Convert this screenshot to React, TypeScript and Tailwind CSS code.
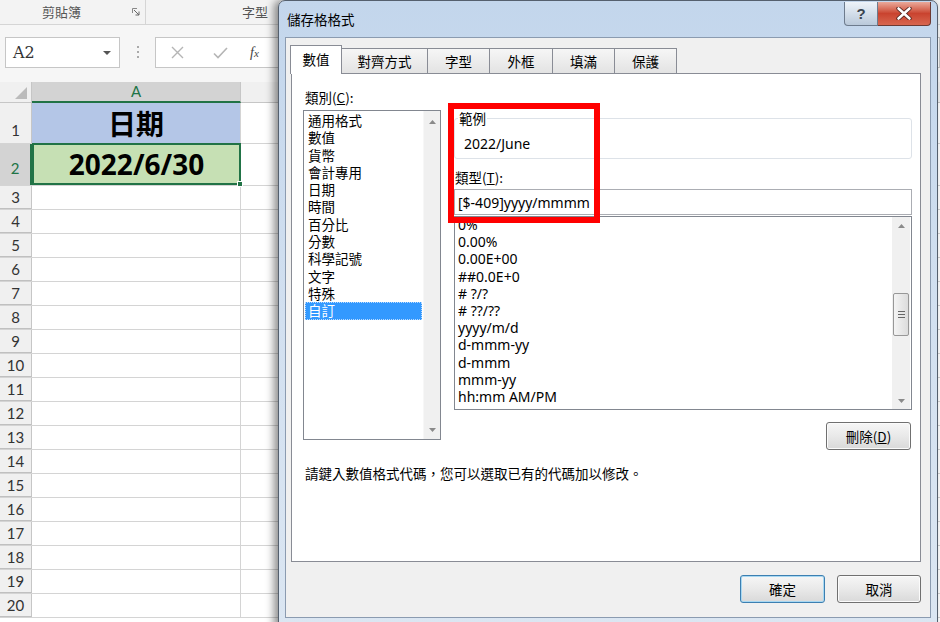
import React from 'react'

const categories = ['通用格式', '數值', '貨幣', '會計專用', '日期', '時間', '百分比', '分數', '科學記號', '文字', '特殊', '自訂']
const formats = ['0%', '0.00%', '0.00E+00', '##0.0E+0', '# ?/?', '# ??/??', 'yyyy/m/d', 'd-mmm-yy', 'd-mmm', 'mmm-yy', 'hh:mm AM/PM']
const tabs = [
  { label: '數值', w: 'w-[52px]', active: true },
  { label: '對齊方式', w: 'w-[87px]' },
  { label: '字型', w: 'w-[63px]' },
  { label: '外框', w: 'w-[64px]' },
  { label: '填滿', w: 'w-[63px]' },
  { label: '保護', w: 'w-[63px]' },
]
const restRows = Array.from({ length: 18 }, (_, i) => i + 3)

function Tri({ down = false }: { down?: boolean }) {
  return (
    <svg width="7" height="4" viewBox="0 0 7 4">
      <path d={down ? 'M0 0H7L3.5 4Z' : 'M0 4H7L3.5 0Z'} fill="#8a8a8a" />
    </svg>
  )
}

function Sheet() {
  return (
    <div className="w-[940px] h-[622px] bg-white flex flex-col font-['Lato','Noto_Sans',sans-serif]">
      {/* ribbon group labels */}
      <div className="h-[25px] shrink-0 bg-[#f3f3f3] border-b border-[#d5d5d5] flex items-center text-[13px] text-[#555] font-['Noto_Sans_CJK_TC',sans-serif]">
        <span className="ml-[42px]">剪貼簿</span>
        <svg className="ml-[51px]" width="8" height="8" viewBox="0 0 8 8">
          <path d="M0.5 0.5H5M0.5 0.5V5" stroke="#888" fill="none" />
          <path d="M2 2L7 7M7 3.5V7H3.5" stroke="#666" fill="none" />
        </svg>
        <div className="ml-[5px] w-px h-full bg-[#d5d5d5]" />
        <span className="ml-[96px]">字型</span>
      </div>

      {/* name box + formula bar */}
      <div className="h-[57px] shrink-0 bg-[#f6f6f6] flex items-start pt-[12px]">
        <div className="ml-[5px] w-[115px] h-[31px] bg-white border border-[#c6c6c6] flex items-center justify-between pl-[7px] pr-[8px]">
          <span className="text-[16px] text-[#333] font-['DejaVu_Serif',serif] font-light">A2</span>
          <svg width="8" height="4" viewBox="0 0 8 4"><path d="M0 0H8L4 4Z" fill="#555" /></svg>
        </div>
        <div className="ml-[17px] mt-[9px] flex flex-col gap-[3px]">
          <div className="w-[2px] h-[2px] bg-[#aaa]" />
          <div className="w-[2px] h-[2px] bg-[#aaa]" />
          <div className="w-[2px] h-[2px] bg-[#aaa]" />
        </div>
        <div className="ml-[16px] flex-1 h-[31px] bg-white border border-[#c6c6c6] flex items-center">
          <svg className="ml-[15px]" width="13" height="13" viewBox="0 0 13 13">
            <path d="M1 1L12 12M12 1L1 12" stroke="#b5b5b5" strokeWidth="1.4" />
          </svg>
          <svg className="ml-[29px]" width="15" height="12" viewBox="0 0 15 12">
            <path d="M1 6.5L5 10.5L14 1" stroke="#b5b5b5" strokeWidth="1.6" fill="none" />
          </svg>
          <span className="ml-[22px] text-[14px] italic text-[#444] font-['Liberation_Serif',serif]">f<span className="text-[11px]">x</span></span>
        </div>
      </div>

      {/* column header */}
      <div className="h-[21px] shrink-0 flex">
        <div className="w-[32px] bg-[#f0f0f0] border-r border-b border-[#c6c6c6] flex items-end justify-end pr-[4px] pb-[3px]">
          <svg width="12" height="12" viewBox="0 0 12 12"><path d="M12 0V12H0Z" fill="#bbbbbb" /></svg>
        </div>
        <div className="w-[209px] bg-[#d3d3d3] border-r border-[#c6c6c6] border-b-2 border-b-[#217346] flex items-center justify-center text-[15px] text-[#217346]">
          A
        </div>
        <div className="flex-1 bg-[#f0f0f0] border-b border-[#c6c6c6]" />
      </div>

      {/* row 1 */}
      <div className="h-[41px] shrink-0 flex border-b border-[#d4d4d4]">
        <div className="w-[32px] bg-[#f0f0f0] border-r border-[#c6c6c6] flex items-end justify-center pb-[2px] text-[15px] text-[#333]">1</div>
        <div className="w-[209px] bg-[#b4c6e7] border-r border-[#d4d4d4] flex items-center justify-center text-[28px] font-bold text-black font-['Noto_Sans_CJK_TC',sans-serif]">
          日期
        </div>
        <div className="flex-1" />
      </div>

      {/* row 2 (selected) */}
      <div className="h-[42px] shrink-0 flex border-b border-[#d4d4d4]">
        <div className="w-[32px] bg-[#d3d3d3] border-r-2 border-[#217346] flex items-end justify-center pb-[6px] text-[15px] text-[#217346]">2</div>
        <div className="w-[209px] relative bg-[#c6e0b4] border-2 border-[#217346] -mt-px flex items-center justify-center text-[28px] font-bold text-black font-['Noto_Sans',sans-serif]">
          2022/6/30
          <div className="absolute -right-[4px] -bottom-[4px] w-[6px] h-[6px] bg-[#217346] border border-white" />
        </div>
        <div className="flex-1" />
      </div>

      {restRows.map((r) => (
        <div key={r} className="h-[24px] shrink-0 flex border-b border-[#d4d4d4]">
          <div className="w-[32px] bg-[#f0f0f0] border-r border-[#c6c6c6] border-b border-b-[#c0c0c0] flex items-center justify-center text-[15px] text-[#333]">
            {r}
          </div>
          <div className="w-[209px] border-r border-[#d4d4d4]" />
          <div className="flex-1" />
        </div>
      ))}
    </div>
  )
}

function WinButton({ children, focused = false, w }: { children: React.ReactNode; focused?: boolean; w: string }) {
  return (
    <div
      className={`${w} h-[28px] rounded-[3px] border flex items-center justify-center text-[13.5px] text-black bg-gradient-to-b from-[#f6f6f6] via-[#e9e9e9] to-[#d9d9d9] ${
        focused ? 'border-[#3c7fb1] shadow-[inset_0_0_0_1px_#a8d8f2]' : 'border-[#707070] shadow-[inset_0_0_0_1px_#fbfbfb]'
      }`}
    >
      {children}
    </div>
  )
}

function Dialog() {
  return (
    <div className="absolute left-[278px] top-0 w-[660px] h-[630px] rounded-t-[7px] border border-[#55606e] bg-gradient-to-b from-[#c3d6ec] via-[#d2e0f0] to-[#dbe6f2] shadow-[-4px_0_9px_rgba(0,0,0,0.45)] font-['Noto_Sans_CJK_TC','Noto_Sans',sans-serif]">
      {/* title bar */}
      <div className="h-[36px] flex items-start">
        <span className="ml-[8px] mt-[9px] text-[13.5px] leading-[18px] text-black">儲存格格式</span>
        <div className="ml-auto mr-[6px] mt-[1px] flex">
          <div className="w-[34px] h-[24px] rounded-bl-[4px] border border-[#6d7b8d] border-t-0 bg-gradient-to-b from-[#eef3f9] via-[#d3deea] to-[#bac9da] flex items-center justify-center">
            <span className="text-[15px] font-bold leading-none text-[#3a4450] font-['Liberation_Sans',sans-serif]">?</span>
          </div>
          <div className="w-[53px] h-[24px] rounded-br-[4px] border border-[#6d3a33] border-t-0 border-l-0 bg-gradient-to-b from-[#e9a99b] via-[#c9432f] to-[#d8664f] flex items-center justify-center">
            <svg width="16" height="13" viewBox="0 0 16 13">
              <path d="M2.5 1.5L13.5 11.5M13.5 1.5L2.5 11.5" stroke="#4a1f1a" strokeWidth="4.2" strokeLinecap="round" />
              <path d="M2.5 1.5L13.5 11.5M13.5 1.5L2.5 11.5" stroke="#ffffff" strokeWidth="2.6" strokeLinecap="round" />
            </svg>
          </div>
        </div>
      </div>

      {/* client area */}
      <div className="ml-[6px] w-[646px] h-[581px] border border-[#8b9bb0] bg-[#f0f0f0] flex flex-col">
        {/* tabs */}
        <div className="mt-[7px] h-[28px] pl-[4px] flex items-end relative z-10">
          {tabs.map((t, i) => (
            <div
              key={t.label}
              className={`${t.w} ${i > 0 ? '-ml-px' : ''} border border-[#898c95] border-b-0 flex items-center justify-center text-[13.5px] text-black ${
                t.active ? 'h-[29px] -mb-px bg-white pb-[2px]' : 'h-[25px] bg-gradient-to-b from-[#f6f6f6] to-[#e3e3e3]'
              }`}
            >
              {t.label}
            </div>
          ))}
        </div>

        {/* panel */}
        <div className="ml-[5px] w-[630px] h-[489px] border border-[#898c95] bg-white relative pt-[16px] pl-[11px]">
          <div className="flex gap-[13px]">
            {/* category column */}
            <div className="w-[138px] flex flex-col">
              <div className="h-[20px] leading-[14px] ml-[2px] text-[13.5px] text-black">
                類別(<u>C</u>):
              </div>
              <div className="h-[330px] border border-[#828790] bg-white flex">
                <div className="flex-1 pt-[1px] pl-[1px] pr-[1px]">
                  {categories.map((c) => (
                    <div
                      key={c}
                      className={`h-[17.3px] leading-[17.3px] pl-[3px] text-[13.5px] ${
                        c === '自訂'
                          ? 'bg-[#3399ff] text-white outline outline-1 outline-dotted outline-[#bcdcff] -outline-offset-1'
                          : 'text-black'
                      }`}
                    >
                      {c}
                    </div>
                  ))}
                </div>
                <div className="w-[17px] bg-[#f0f0f0] border-l border-[#f7f7f7] flex flex-col justify-between items-center pt-[9px] pb-[7px]">
                  <Tri />
                  <Tri down />
                </div>
              </div>
            </div>

            {/* type column */}
            <div className="w-[458px] flex flex-col">
              <div className="mt-[28px] h-[41px] relative border border-[#dde2e8] rounded-[3px] pl-[9px] pt-[16px] text-[14px] leading-[18px] text-black font-['Noto_Sans',sans-serif]">
                <span className="absolute -top-[9px] left-[3px] bg-white px-[1px] text-[13.5px] leading-[16px] font-['Noto_Sans_CJK_TC',sans-serif]">
                  範例
                </span>
                2022/June
              </div>
              <div className="h-[30px] pt-[10px] ml-[1px] text-[13.5px] leading-[16px] text-black">
                類型(<u>T</u>):
              </div>
              <div className="h-[26px] border border-[#abadb3] bg-white flex items-center pl-[3px] text-[14px] text-black font-['Noto_Sans',sans-serif]">
                [$-409]yyyy/mmmm
              </div>
              <div className="mt-px h-[194px] border border-[#828790] bg-white flex overflow-hidden">
                <div className="flex-1 pl-[3px] -mt-[1px] font-['Noto_Sans',sans-serif]">
                  {formats.map((f) => (
                    <div key={f} className="h-[17.2px] leading-[17.2px] text-[14px] text-black whitespace-pre">
                      {f}
                    </div>
                  ))}
                </div>
                <div className="w-[18px] mr-px bg-[#f0f0f0] flex flex-col items-center">
                  <div className="h-[17px] flex items-center justify-center"><Tri /></div>
                  <div className="h-[59px]" />
                  <div className="w-[16px] h-[43px] rounded-[2px] border border-[#979797] bg-gradient-to-r from-[#f4f4f4] to-[#dcdcdc] flex flex-col items-center justify-center gap-[2px]">
                    <div className="w-[7px] h-px bg-[#666]" />
                    <div className="w-[7px] h-px bg-[#666]" />
                    <div className="w-[7px] h-px bg-[#666]" />
                  </div>
                  <div className="flex-1" />
                  <div className="h-[17px] flex items-center justify-center"><Tri down /></div>
                </div>
              </div>
              <div className="mt-[12px] mr-[1px] self-end">
                <WinButton w="w-[85px]">
                  刪除(<u>D</u>)
                </WinButton>
              </div>
            </div>
          </div>

          <div className="mt-[15px] ml-[2px] text-[13.5px] leading-[16px] text-black">
            請鍵入數值格式代碼，您可以選取已有的代碼加以修改。
          </div>

          {/* highlight annotation */}
          <div className="absolute left-[156px] top-[29px] w-[152px] h-[120px] border-[6px] border-[#ff0000] pointer-events-none" />
        </div>

        {/* dialog buttons */}
        <div className="mt-[13px] pr-[9px] flex justify-end gap-[12px]">
          <WinButton w="w-[85px]" focused>
            確定
          </WinButton>
          <WinButton w="w-[84px]">取消</WinButton>
        </div>
      </div>
    </div>
  )
}

export default function App() {
  return (
    <div className="relative w-[940px] h-[622px] overflow-hidden bg-white">
      <Sheet />
      <Dialog />
    </div>
  )
}
